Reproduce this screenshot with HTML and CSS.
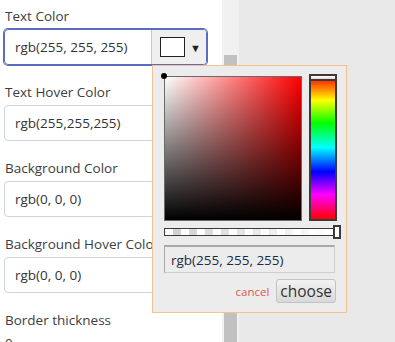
FILE: index.html
```html
<!DOCTYPE html>
<html>
<head>
<meta charset="utf-8">
<link rel="stylesheet" href="styles.css">
</head>
<body>
<div class="page">
  <div class="panel">
    <div class="field">
      <div class="label">Text Color</div>
      <div class="input focus">
        <span class="value">rgb(255, 255, 255)</span>
        <span class="addon"><span class="swatch"></span><span class="caret">▼</span></span>
      </div>
    </div>
    <div class="field">
      <div class="label">Text Hover Color</div>
      <div class="input"><span class="value">rgb(255,255,255)</span></div>
    </div>
    <div class="field">
      <div class="label">Background Color</div>
      <div class="input"><span class="value">rgb(0, 0, 0)</span></div>
    </div>
    <div class="field">
      <div class="label">Background Hover Color</div>
      <div class="input"><span class="value">rgb(0, 0, 0)</span></div>
    </div>
    <div class="field">
      <div class="label">Border thickness</div>
      <div class="label">0</div>
    </div>
  </div>
  <div class="scrollbar"><div class="thumb"></div></div>
  <div class="rest"></div>

  <div class="picker">
    <div class="pick-top">
      <div class="sv"><span class="sv-dot"></span></div>
      <div class="hue"><span class="hue-mark"></span></div>
    </div>
    <div class="alpha"><span class="alpha-handle"></span></div>
    <div class="pick-text">rgb(255, 255, 255)</div>
    <div class="pick-actions">
      <span class="cancel">cancel</span>
      <span class="choose">choose</span>
    </div>
  </div>
</div>
</body>
</html>
```
FILE: styles.css
```css
html, body {
  margin: 0;
  padding: 0;
  width: 395px;
  height: 342px;
  overflow: hidden;
  font-family: "Open Sans", "Noto Sans", sans-serif;
}
.page {
  position: relative;
  display: flex;
  height: 342px;
}
.panel {
  width: 218px;
  padding: 6px 0 0 4px;
  background: #fff;
  box-sizing: content-box;
  display: flex;
  flex-direction: column;
  gap: 17px;
}
.field {
  display: flex;
  flex-direction: column;
}
.label {
  font-size: 13.5px;
  line-height: 20px;
  color: #3d3d3d;
  margin: 0 0 3px 1px;
  white-space: nowrap;
}
.input {
  width: 203px;
  height: 36px;
  box-sizing: border-box;
  border: 1px solid #ced4da;
  border-radius: 4px;
  display: flex;
  align-items: center;
  overflow: hidden;
  font-size: 13.5px;
  color: #333;
}
.input.focus {
  border-color: #5c6bc0;
  box-shadow: 0 0 0 1px #5c6bc0;
}
.value {
  flex: 1;
  padding-left: 10px;
  white-space: nowrap;
}
.addon {
  width: 55px;
  height: 100%;
  background: #efefef;
  border-left: 1px solid #c8c8c8;
  display: flex;
  align-items: center;
  gap: 5px;
  padding-left: 8px;
  box-sizing: border-box;
}
.swatch {
  width: 25px;
  height: 20px;
  box-sizing: border-box;
  border: 1px solid #222;
  background: #fff;
}
.caret {
  font-size: 11px;
  color: #222;
}
.scrollbar {
  width: 17px;
  background: #f1f1f1;
  padding: 55px 2px 0;
  box-sizing: border-box;
}
.thumb {
  height: 300px;
  background: #c1c1c1;
}
.rest {
  flex: 1;
  background: #e9e9e9;
}
.picker {
  position: absolute;
  left: 152px;
  top: 65px;
  width: 195px;
  height: 248px;
  box-sizing: border-box;
  border: 1px solid #f4c18f;
  background: #ececec;
  padding: 8px 0 0 11px;
  display: flex;
  flex-direction: column;
}
.pick-top {
  display: flex;
  gap: 7px;
  align-items: flex-start;
}
.sv {
  position: relative;
  width: 138px;
  height: 145px;
  margin-top: 2px;
  box-sizing: border-box;
  border: 1px solid #6a6a6a;
  background: linear-gradient(to top, #000, rgba(0,0,0,0)), linear-gradient(to right, #fff, #f00);
}
.sv-dot {
  position: absolute;
  left: -4px;
  top: -4px;
  width: 6px;
  height: 6px;
  border-radius: 50%;
  background: #000;
}
.hue {
  position: relative;
  width: 28px;
  height: 147px;
  box-sizing: border-box;
  border: 2px solid #3a3a3a;
  background: linear-gradient(to bottom, #f00 0%, #ff0 17%, #0f0 33%, #0ff 50%, #00f 67%, #f0f 83%, #f00 100%);
}
.hue-mark {
  position: absolute;
  left: 0;
  right: 0;
  top: 0;
  height: 5px;
  background: linear-gradient(#fff, #f0d0d0);
  border-bottom: 2px solid #3a3a3a;
  box-sizing: border-box;
}
.alpha {
  position: relative;
  margin-top: 7px;
  width: 171px;
  height: 8px;
  box-sizing: border-box;
  border: 1px solid #3a3a3a;
  background:
    linear-gradient(to right, rgba(255,255,255,0), #fff),
    repeating-linear-gradient(to right, #fff 0 8px, #cfcfcf 8px 16px);
}
.alpha-handle {
  position: absolute;
  right: -7px;
  top: -4px;
  width: 8px;
  height: 14px;
  box-sizing: border-box;
  border: 2px solid #3a3a3a;
  background: #fff;
}
.pick-text {
  margin-top: 9px;
  width: 171px;
  height: 28px;
  box-sizing: border-box;
  border: 1px solid #cfcfcf;
  border-top: 2px solid #a9a9a9;
  border-left-color: #a9a9a9;
  padding-left: 6px;
  display: flex;
  align-items: center;
  font-size: 13.5px;
  color: #1d2b45;
}
.pick-actions {
  margin-top: 6px;
  width: 172px;
  display: flex;
  justify-content: flex-end;
  align-items: center;
  gap: 7px;
}
.cancel {
  font-size: 11.5px;
  color: #e0564f;
}
.choose {
  height: 24px;
  padding: 0 3px;
  box-sizing: border-box;
  border: 1px solid #c3c3c3;
  border-radius: 3px;
  background: linear-gradient(#f2f2f2, #d9d9d9);
  font-size: 15.5px;
  line-height: 22px;
  color: #333;
}
```
